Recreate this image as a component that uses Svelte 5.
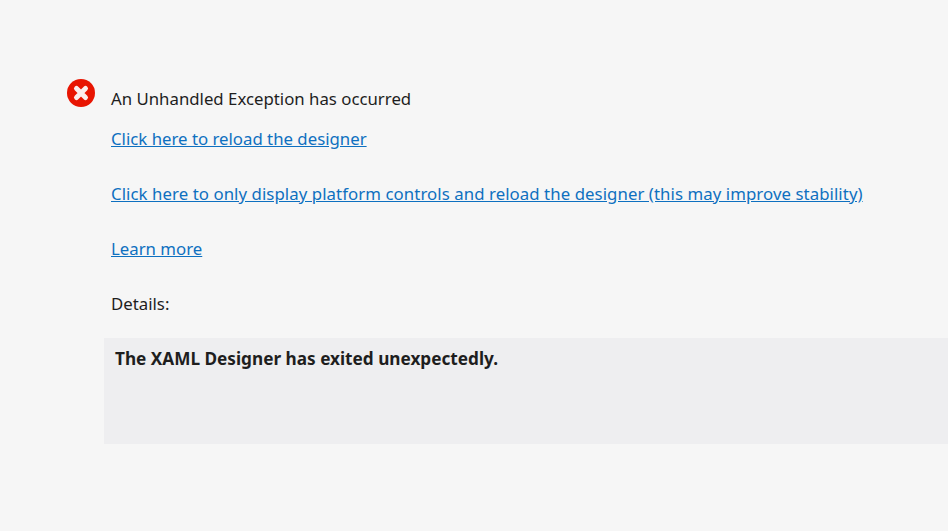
<script>
  const links = [
    "Click here to reload the designer",
    "Click here to only display platform controls and reload the designer (this may improve stability)",
    "Learn more"
  ];
</script>

<main class="page">
  <div class="heading">
    <svg class="error-icon" viewBox="0 0 30 30" width="30" height="30" aria-hidden="true">
      <circle cx="15" cy="15" r="14" fill="#e81502" />
      <path d="M10.5 10.5 L19.5 19.5 M19.5 10.5 L10.5 19.5" stroke="#fbeeee" stroke-width="5" stroke-linecap="round" />
    </svg>
    <span class="title">An Unhandled Exception has occurred</span>
  </div>

  <div class="links">
    {#each links as link, i}
      <a href="#top" class="link" class:long={i === 1}>{link}</a>
    {/each}
    <span class="label">Details:</span>
  </div>

  <div class="details">The XAML Designer has exited unexpectedly.</div>
</main>

<style>
  :global(body) {
    margin: 0;
    background: #f6f6f6;
  }
  .page {
    height: 531px;
    box-sizing: border-box;
    padding-top: 78px;
    font-family: "Noto Sans", "Open Sans", sans-serif;
    font-size: 16.8px;
    line-height: 24px;
    color: #1e1e1e;
    overflow: hidden;
  }
  .heading {
    display: flex;
    align-items: flex-start;
    padding-left: 66px;
    gap: 15px;
  }
  .error-icon {
    flex: none;
  }
  .title {
    margin-top: 9px;
  }
  .links {
    display: flex;
    flex-direction: column;
    align-items: flex-start;
    gap: 31px;
    margin-top: 16px;
    padding-left: 111px;
  }
  .link {
    color: #0e70c0;
    text-decoration: underline;
  }
  .long {
    letter-spacing: 0.07px;
  }
  .details {
    margin: 22px 0 0 104px;
    height: 106px;
    box-sizing: border-box;
    padding: 9px 11px;
    background: #eeeef0;
    font-size: 17.2px;
    font-weight: 700;
  }
</style>
